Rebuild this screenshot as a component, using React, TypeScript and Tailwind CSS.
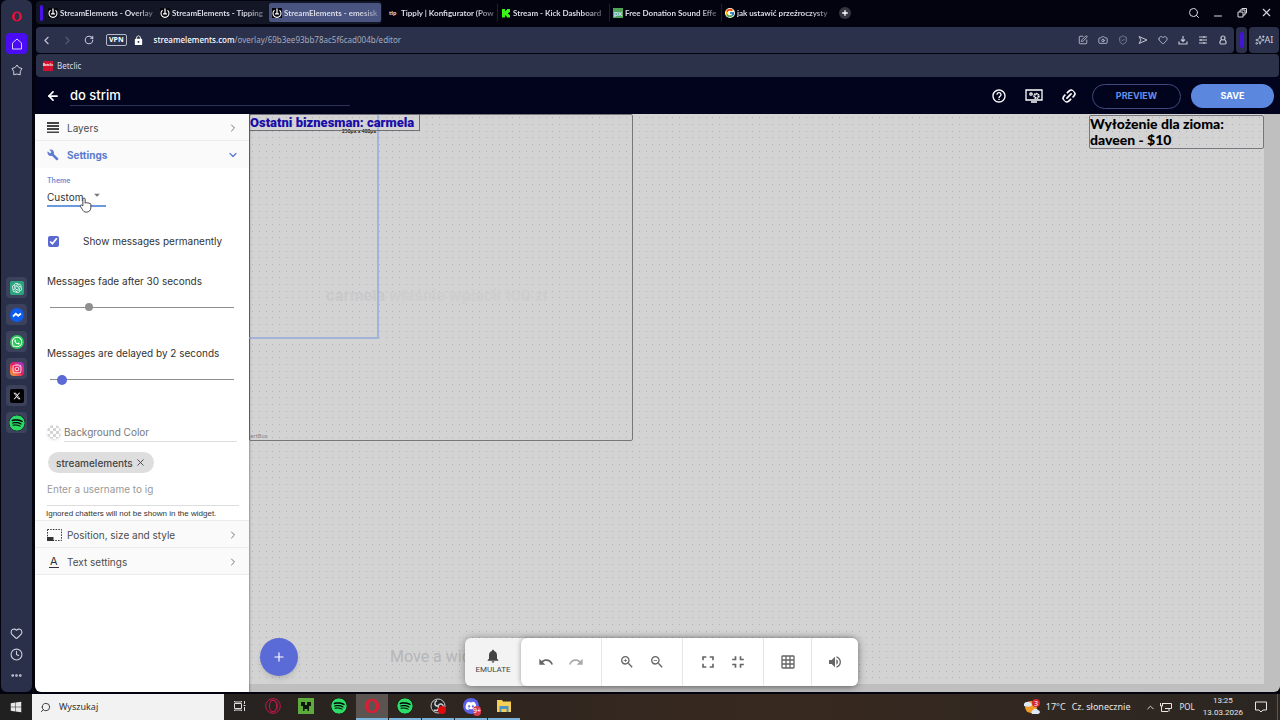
import { useState } from "react";
import type { ReactNode } from "react";
import {
  ArrowLeft,
  Camera,
  ChevronDown,
  ChevronLeft,
  ChevronRight,
  ChevronUp,
  Clock,
  Ellipsis,
  Heart,
  Minus,
  Plus,
  RotateCw,
  Search,
  ShieldCheck,
  Sparkles,
  SquarePen,
  X,
} from "lucide-react";
import { FaDiscord, FaInstagram, FaSpotify, FaWhatsapp, FaWindows } from "react-icons/fa";
import { FaXTwitter } from "react-icons/fa6";
import { FcGoogle } from "react-icons/fc";
import {
  MdArrowDropDown,
  MdBuild,
  MdFullscreen,
  MdFullscreenExit,
  MdGridOn,
  MdHelpOutline,
  MdLock,
  MdNotifications,
  MdRedo,
  MdUndo,
  MdVolumeUp,
  MdZoomIn,
  MdZoomOut,
} from "react-icons/md";
import { RiOpenaiFill } from "react-icons/ri";

const OperaLogo = ({ className, thin }: { className: string; thin?: boolean }) => (
  <svg viewBox="0 0 24 24" className={className} fill="none" stroke="currentColor">
    {thin ? (
      <>
        <circle cx="12" cy="12" r="11" strokeWidth="1.5" />
        <ellipse cx="12" cy="12" rx="5.5" ry="8.5" strokeWidth="1.5" />
        <path d="M8 3.5c7-2 11 3 11 8.500s-4 10.500-11 8.500" strokeWidth="1.2" />
      </>
    ) : (
      <path
        fill="currentColor"
        stroke="none"
        fillRule="evenodd"
        d="M12 1a11 11 0 1 0 0 22 11 11 0 0 0 0-22Zm0 3c3 0 5 3.500 5 8s-2 8-5 8-5-3.500-5-8 2-8 5-8Z"
      />
    )}
  </svg>
);

const SeFavicon = () => (
  <svg viewBox="0 0 20 20" className="size-2.5 shrink-0">
    <rect width="20" height="20" fill="#05060c" />
    <path d="M5 4.500a8 8 0 1 0 10 0" fill="none" stroke="#fff" strokeWidth="2.200" />
    <path d="M10 1v11M6 11.500h8" stroke="#fff" strokeWidth="2.500" />
  </svg>
);

const KickFavicon = () => (
  <svg viewBox="0 0 10 10" className="size-2.5 shrink-0" fill="#39f31b">
    <path d="M1 1h3v2h1V2h1V1h3v3H8v1H7v1h1v1h1v2.500H6v-1H5v-1H4v2H1z" />
  </svg>
);

const tabs: { icon: ReactNode; title: string }[] = [
  { icon: <SeFavicon />, title: "StreamElements - Overlay" },
  { icon: <SeFavicon />, title: "StreamElements - Tipping" },
  { icon: <SeFavicon />, title: "StreamElements - emesisk" },
];

const otherTabs: { icon: ReactNode; title: string }[] = [
  { icon: <b className="w-2.5 text-[6px]">tip</b>, title: "Tipply | Konfigurator (Pow" },
  { icon: <KickFavicon />, title: "Stream - Kick Dashboard" },
  {
    icon: <b className="flex size-2.5 shrink-0 items-center justify-center bg-[#4fa45a] text-[8px] leading-none">px</b>,
    title: "Free Donation Sound Effe",
  },
  { icon: <FcGoogle className="size-2.5 shrink-0 rounded-full bg-white" />, title: "jak ustawić przeźroczysty" },
];

const Tab = ({ icon, title, active }: { icon: ReactNode; title: string; active?: boolean }) => (
  <button
    className={`flex h-[19px] w-28 shrink-0 items-center gap-0.5 rounded-xs pl-[3px] text-left font-['Lato'] text-[8px] font-bold text-[#d9dbe6] ${
      active ? "bg-[#495480]" : ""
    }`}
  >
    {icon}
    <span className="whitespace-nowrap [mask-image:linear-gradient(to_right,black_80%,rgba(0,0,0,0.4))]">{title}</span>
  </button>
);

const TabStrip = () => (
  <div className="flex h-[27px] items-center pb-0.5">
    <div className="flex h-[23px] items-center gap-0.5 rounded-sm bg-[#131624] pl-1 pr-px">
      <span className="h-4 w-[3px] rounded-xs bg-[#4a12e8]" />
      <div className="flex">
        {tabs.map((t, i) => (
          <Tab key={i} {...t} active={i === 2} />
        ))}
      </div>
    </div>
    <div className="ml-1 flex divide-x divide-[#1c2034]">
      {otherTabs.map((t, i) => (
        <Tab key={i} {...t} />
      ))}
    </div>
    <button aria-label="New tab" className="ml-[5px] flex size-3 items-center justify-center rounded-full bg-[#33363f] text-white">
      <Plus size={8} strokeWidth={4} />
    </button>
    <div className="ml-auto flex items-center gap-3 pr-1.5 text-[#d8dae2]">
      <button aria-label="Search tabs"><Search size={12} strokeWidth={2} /></button>
      <button aria-label="Minimize" className="pt-1.5"><Minus size={12} strokeWidth={2} /></button>
      <button aria-label="Restore">
        <svg viewBox="0 0 12 12" className="size-3" fill="none" stroke="currentColor">
          <path d="M2 5h5v5H2zM4 5V3h5v5H7M6 3V1.500h4.500V6H9" />
        </svg>
      </button>
      <button aria-label="Close"><X size={13} strokeWidth={2} /></button>
    </div>
  </div>
);

const AddressRow = () => (
  <div className="flex h-[26px] gap-0.5">
    <div className="flex flex-1 items-center rounded-sm bg-[#2b314b] pl-1 pr-1.5 text-[#c3c7d6]">
      <button aria-label="Back"><ChevronLeft size={13} /></button>
      <button aria-label="Forward" className="ml-2 text-[#555b75]"><ChevronRight size={13} /></button>
      <button aria-label="Reload" className="ml-2.5"><RotateCw size={10} strokeWidth={2.5} /></button>
      <span className="ml-3 rounded-xs border border-[#b6bac8] px-0.5 text-[7px] leading-[10px] font-bold text-white">VPN</span>
      <MdLock size={11} className="ml-1.5 text-white" />
      <span className="ml-2.5 text-[8px] text-[#a5aabd]">
        <span className="font-medium text-white">streamelements.com</span>/overlay/69b3ee93bb78ac5f6cad004b/editor
      </span>
      <div className="ml-auto flex items-center gap-2.5">
        <SquarePen size={10} />
        <Camera size={10} />
        <ShieldCheck size={10} className="text-[#858ba3]" />
        <svg viewBox="0 0 10 10" className="size-2.5" fill="none" stroke="currentColor" strokeLinejoin="round">
          <path d="M1 1.500 9 5 1 8.500 3 5z" />
        </svg>
        <Heart size={10} />
        <svg viewBox="0 0 10 10" className="size-2.5" fill="none" stroke="currentColor" strokeWidth="1.200">
          <path d="M5 1v5M3 4.500 5 6.500l2-2M1 6.500V9h8V6.500" />
        </svg>
        <svg viewBox="0 0 10 10" className="size-2.5" stroke="currentColor" strokeWidth="1.200">
          <path d="M1 2h8M1 5h8M1 8h8M6 1v2M3 4v2M6 7v2" />
        </svg>
        <svg viewBox="0 0 10 10" className="size-2.5" fill="none" stroke="currentColor" strokeWidth="1.200">
          <circle cx="5" cy="3" r="2" />
          <path d="M3.500 4.500C1.500 6 1.500 9 3 9h4c1.500 0 1.500-3-.5-4.500" />
        </svg>
      </div>
    </div>
    <div className="flex w-[11px] items-center justify-center rounded-sm bg-[#2b314b]">
      <span className="h-4 w-1 rounded-xs bg-[#4313d8]" />
    </div>
    <button className="flex w-[30px] items-center justify-center rounded-sm bg-[#2b314b] text-[9px] text-[#ccd0de]">
      <Sparkles size={10} />
      AI
    </button>
  </div>
);

const SideApp = ({ label, children }: { label: string; children: ReactNode }) => (
  <button aria-label={label} className="flex size-[21px] items-center justify-center rounded-sm bg-[#3c425c]">
    {children}
  </button>
);

const BrowserSidebar = () => (
  <nav className="flex w-[31px] shrink-0 flex-col items-center rounded-md bg-[#2b304a] pb-2.5 text-[#ccd0de]">
    <OperaLogo className="mt-[11px] h-[11px] w-3 text-[#e3113c]" />
    <button aria-label="Home" className="mt-[11px] flex size-[21px] items-center justify-center rounded-sm bg-[#4a0cf5]">
      <svg viewBox="0 0 12 12" className="size-3" fill="none" stroke="#d9d0ff" strokeLinejoin="round">
        <path d="M1.500 11V5L6 1l4.500 4v6z" />
      </svg>
    </button>
    <button aria-label="Favourites" className="mt-2.5">
      <svg viewBox="0 0 12 12" className="size-3" fill="none" stroke="currentColor" strokeLinejoin="round">
        <path d="M6 1 7.800 3.500 11 4.500 9.300 7.300 9.200 10.800 6 10 2.800 10.800 2.700 7.300 1 4.500 4.200 3.500z" />
      </svg>
    </button>
    <div className="mt-[201px] flex flex-col gap-1.5">
      <SideApp label="ChatGPT"><RiOpenaiFill className="size-3.5 rounded-xs bg-[#2aa37f] p-px text-white" /></SideApp>
      <SideApp label="Messenger">
        <span className="flex size-3.5 items-center justify-center rounded-full bg-[#0d5cf0]">
          <svg viewBox="0 0 10 10" className="size-2.5" fill="none" stroke="#fff" strokeWidth="1.800"><path d="M1 6.500 3.800 3.800l2.400 2L9 3.500" /></svg>
        </span>
      </SideApp>
      <SideApp label="WhatsApp"><FaWhatsapp className="size-3.5 rounded-full bg-[#2bc65a] p-px text-white" /></SideApp>
      <SideApp label="Instagram">
        <FaInstagram className="size-3.5 rounded-sm bg-linear-to-tr from-[#f9a01b] via-[#e8175d] to-[#a01bd0] p-0.5 text-white" />
      </SideApp>
      <SideApp label="X"><FaXTwitter className="size-3.5 rounded-xs bg-black p-[3px] text-white" /></SideApp>
      <SideApp label="Spotify"><FaSpotify className="size-4 rounded-full bg-black text-[#2bd965]" /></SideApp>
    </div>
    <div className="mt-auto flex flex-col items-center gap-2">
      <Heart size={13} />
      <Clock size={13} />
      <Ellipsis size={13} strokeWidth={3} />
    </div>
  </nav>
);

const EditorHeader = () => (
  <header className="flex h-[37px] items-center bg-[#01041c] pl-[11px] pr-1.5 text-white">
    <button aria-label="Back to overlays"><ArrowLeft size={14} strokeWidth={3} /></button>
    <input
      aria-label="Overlay name"
      defaultValue="do strim"
      className="ml-2.5 h-5 w-[280px] border-b border-[#2c3354] bg-transparent font-['Inter'] text-[13px] font-medium outline-none"
    />
    <div className="ml-auto flex items-center pt-px font-['Inter']">
      <button aria-label="Help"><MdHelpOutline size={16} /></button>
      <button aria-label="Display settings" className="ml-[18px]">
        <svg viewBox="0 0 18 14" className="h-3.5 w-[18px]" fill="none" stroke="currentColor" strokeWidth="1.300">
          <path d="M1 1h16v10H1zM6 13h6" />
          <circle cx="6" cy="5" r="1.200" />
          <circle cx="11.500" cy="7" r="2.200" strokeWidth="2" strokeDasharray="1.300 .5" />
        </svg>
      </button>
      <button aria-label="Copy link" className="ml-[19px]">
        <svg viewBox="0 0 24 24" className="size-3.5 -rotate-45" fill="none" stroke="currentColor" strokeWidth="3" strokeLinecap="round">
          <path d="M14 6h4a6 6 0 0 1 0 12h-2M10 18H6A6 6 0 0 1 6 6h2M7 12h10" />
        </svg>
      </button>
      <button className="ml-4 h-[25px] w-[89px] rounded-full border border-[#3f4a7c] text-[9px] font-bold text-[#6490e8]">PREVIEW</button>
      <button className="ml-2.5 h-6 w-[83px] rounded-full bg-[#5b88de] text-[9px] font-bold">SAVE</button>
    </div>
  </header>
);

const PanelRow = ({ icon, label, open }: { icon: ReactNode; label: string; open?: boolean }) => (
  <button
    className={`flex h-[27px] w-full items-center border-b bg-[#fafafa] pl-3 pr-2.5 pt-px text-[10px] ${
      open ? "border-[#fafafa] font-bold text-[#5b7bd0]" : "border-[#ebebeb] text-[#4d4d4d]"
    }`}
  >
    <span className="flex w-5 items-center">{icon}</span>
    {label}
    {open ? (
      <ChevronDown size={12} strokeWidth={2.5} className="ml-auto" />
    ) : (
      <ChevronRight size={12} className="ml-auto text-[#777]" />
    )}
  </button>
);

const range =
  "mt-3 block h-3 w-full appearance-none bg-transparent [&::-webkit-slider-runnable-track]:h-px [&::-webkit-slider-runnable-track]:bg-[#8e8e8e] [&::-webkit-slider-thumb]:appearance-none [&::-webkit-slider-thumb]:rounded-full";

const SettingsPanel = () => {
  const [fade, setFade] = useState(30);
  const [delay, setDelay] = useState(2);
  const [permanent, setPermanent] = useState(true);

  return (
    <aside className="relative z-10 w-[214px] shrink-0 overflow-hidden rounded-bl-md bg-white font-['Inter'] text-[10px] leading-4 text-[#333] shadow-[1px_0_2px_rgba(0,0,0,0.3)]">
      <PanelRow
        label="Layers"
        icon={
          <svg viewBox="0 0 12 11" className="h-[11px] w-3" fill="#444">
            <path d="M0 0h12v2H0zM0 3h12v2H0zM0 6h12v2H0zM0 9.500h12v1.500H0z" />
          </svg>
        }
      />
      <PanelRow label="Settings" icon={<MdBuild size={12} />} open />
      <div className="px-3">
        <label htmlFor="theme" className="block pt-[5px] text-[7px] font-semibold text-[#6c8fd6]">Theme</label>
        <div className="relative flex w-[59px] border-b-2 border-[#6c9ae0]">
          <select id="theme" className="h-4 w-full appearance-none bg-transparent text-[10px] outline-none">
            <option>Custom</option>
          </select>
          <MdArrowDropDown size={14} className="pointer-events-none absolute -top-px right-0.5 text-[#777]" />
          <svg viewBox="0 0 14 18" className="pointer-events-none absolute left-8 top-2 h-4 w-[13px]" fill="#fff" stroke="#333" strokeLinejoin="round">
            <path d="M4 10V2.500a1.300 1.300 0 0 1 2.600 0V7a1.200 1.200 0 0 1 2.200 0 1.200 1.200 0 0 1 2.200.6 1.100 1.100 0 0 1 2 .6V12c0 3-2 5-5 5-2.500 0-3.500-1-4.500-3L1.200 10.500C.8 9 2.500 8.500 3.200 9.500z" />
          </svg>
        </div>
        <label className="mt-[26px] flex items-center">
          <input
            type="checkbox"
            checked={permanent}
            onChange={(e) => setPermanent(e.target.checked)}
            className="m-0 ml-px size-[11px] accent-[#5b68d0]"
          />
          <span className="ml-6">Show messages permanently</span>
        </label>
        <label htmlFor="fade" className="mt-6 block">Messages fade after {fade} seconds</label>
        <div className="px-[3px]">
          <input
            id="fade"
            type="range"
            min={0}
            max={150}
            value={fade}
            onChange={(e) => setFade(Number(e.target.value))}
            className={`${range} [&::-webkit-slider-thumb]:-mt-1 [&::-webkit-slider-thumb]:size-2 [&::-webkit-slider-thumb]:bg-[#909090]`}
          />
        </div>
        <label htmlFor="delay" className="mt-8 block">Messages are delayed by {delay} seconds</label>
        <div className="px-[3px]">
          <input
            id="delay"
            type="range"
            min={0}
            max={50}
            value={delay}
            onChange={(e) => setDelay(Number(e.target.value))}
            className={`${range} [&::-webkit-slider-thumb]:-mt-1 [&::-webkit-slider-thumb]:size-2.5 [&::-webkit-slider-thumb]:bg-[#5b6ad4]`}
          />
        </div>
        <div className="mt-[37px] flex items-center gap-[3px]">
          <span className="flex size-3.5 items-center justify-center rounded-full bg-[repeating-conic-gradient(#d4d4d4_0_25%,#fff_0_50%)] bg-size-[6px_6px] shadow-sm" />
          <input
            aria-label="Background color"
            placeholder="Background Color"
            className="h-5 min-w-0 flex-1 border-b border-[#ddd] outline-none placeholder:text-[#777]"
          />
        </div>
        <span className="ml-px mt-2.5 flex h-[21px] w-fit items-center gap-0.5 rounded-full bg-[#dedede] px-2 font-medium text-[#444]">
          streamelements
          <button aria-label="Remove streamelements"><X size={11} /></button>
        </span>
      </div>
      <div className="pl-3 pr-2.5">
        <div className="border-b border-[#ddd] pb-2 pt-2">
          <input
            aria-label="Ignored usernames"
            placeholder="Enter a username to ig"
            className="block h-4 w-[118px] outline-none placeholder:text-[#9a9a9a]"
          />
        </div>
      </div>
      <p className="h-[15px] border-b border-[#ebebeb] pl-[11px] font-['Liberation_Sans'] text-[8px]">
        Ignored chatters will not be shown in the widget.
      </p>
      <PanelRow
        label="Position, size and style"
        icon={
          <svg viewBox="0 0 15 12" className="h-3 w-[15px]" fill="none" stroke="#333">
            <path d="M.5 .5h14v11H.5z" strokeDasharray="1.500 1.200" />
            <path d="M0 8h6.500v4H0z" fill="#333" stroke="none" />
          </svg>
        }
      />
      <PanelRow label="Text settings" icon={<span className="ml-0.5 border-b border-[#333] px-px text-[11px] leading-[11px] text-[#333]">A</span>} />
    </aside>
  );
};

// three dots per 20px tile in both directions
const dots = [3, 10, 17];

const DotGrid = () => (
  <svg className="absolute inset-0 size-full" aria-hidden="true">
    <defs>
      <pattern id="dots" width="20" height="20" patternUnits="userSpaceOnUse">
        {dots.map((y) => dots.map((x) => <rect key={`${x}-${y}`} x={x} y={y} width="1" height="1" fill="#b2b3b7" />))}
      </pattern>
    </defs>
    <rect width="100%" height="100%" fill="url(#dots)" />
  </svg>
);

const tool = "flex items-center justify-center";

const Toolbar = () => (
  <div className="absolute bottom-1.5 left-54 flex h-12 rounded-md bg-[#f3f3f3] text-[#666] shadow-[0_1px_8px_rgba(0,0,0,0.4)]">
    <button className="flex w-14 flex-col items-center justify-center font-['Roboto'] text-[8px] leading-3 text-[#444]">
      <MdNotifications size={16} />
      EMULATE
    </button>
    <div className="flex divide-x divide-[#e6e6e6] rounded-md bg-white shadow-[-1px_0_4px_rgba(0,0,0,0.25)]">
      <div className={`${tool} w-[81px] gap-3.5`}>
        <button aria-label="Undo"><MdUndo size={16} /></button>
        <button aria-label="Redo" className="text-[#aaa]"><MdRedo size={16} /></button>
      </div>
      <div className={`${tool} w-[81px] gap-3.5`}>
        <button aria-label="Zoom in"><MdZoomIn size={16} /></button>
        <button aria-label="Zoom out"><MdZoomOut size={16} /></button>
      </div>
      <div className={`${tool} w-[81px] gap-2.5`}>
        <button aria-label="Fit to screen"><MdFullscreen size={20} /></button>
        <button aria-label="Actual size"><MdFullscreenExit size={20} /></button>
      </div>
      <button aria-label="Toggle grid" className={`${tool} w-12`}><MdGridOn size={16} /></button>
      <button aria-label="Sound" className={`${tool} w-[46px]`}><MdVolumeUp size={16} /></button>
    </div>
  </div>
);

const Canvas = () => (
  <main className="relative flex-1 overflow-hidden rounded-br-md bg-[#bfbfbf] pb-2 pr-4">
    <div className="relative h-full overflow-hidden bg-[#d3d3d3]">
      <DotGrid />
      <div className="absolute left-0 top-0 h-[327px] w-[384px] rounded-xs border border-[#77777b]" />
      <span className="absolute -left-1 top-[318px] font-['Roboto'] text-[6px] leading-2 text-[#888]">AlertBox</span>
      <p className="absolute left-[77px] top-[172px] font-['Inter'] text-[15px] leading-5 font-bold text-[#c9c9cc]">
        carmela <span className="text-[#cececf]">właśnie wpłacił 100 zł</span>
      </p>
      <div className="absolute left-0 top-0 h-[225px] w-[130px] border-b-2 border-r-2 border-[#a3b4da]" />
      <span className="absolute left-[93px] top-[13px] whitespace-nowrap font-['Open_Sans'] text-[5px] leading-2 font-semibold text-black">250px x 400px</span>
      <div className="absolute left-0 top-0 h-[17px] w-[171px] whitespace-nowrap border border-[#6f7078] font-['Roboto'] text-[13px] leading-[15px] font-black text-[#1a0da8]">
        Ostatni biznesman: carmela
      </div>
      <div className="absolute right-0 top-px w-[175px] rounded-xs border border-[#77777b] font-['Lato'] text-[14px] leading-4 font-black text-black">
        Wyłożenie dla zioma:
        <br />
        daveen - $10
      </div>
      <span className="absolute bottom-[17px] left-[141px] font-['Roboto'] text-[16px] leading-5 text-[#b6b6b8]">Move a wid</span>
    </div>
    <button aria-label="Add widget" className="absolute bottom-4 left-[11px] flex size-[38px] items-center justify-center rounded-full bg-[#5a6ad6] text-white shadow-md">
      <Plus size={14} />
    </button>
    <Toolbar />
  </main>
);

const taskApps: { name: string; icon: ReactNode; running?: boolean; active?: boolean }[] = [
  {
    name: "Task view",
    icon: (
      <svg viewBox="0 0 12 12" className="size-3" fill="none" stroke="#ddd">
        <path d="M.5 3.500h7v5h-7zM.5 1v1h7V1M.5 11v-1h7v1M10.500 1v3M10.500 7v4M9.500 5.500h2" />
      </svg>
    ),
  },
  { name: "Opera", icon: <OperaLogo thin className="size-4 text-[#c4164c]" /> },
  {
    name: "Minecraft",
    icon: (
      <svg viewBox="0 0 16 16" className="size-4">
        <rect width="16" height="16" fill="#5cab3c" />
        <path d="M3 4h4v3h2V4h4v4h-2v5H9.500v-2h-3v2H5V8H3z" fill="#10180d" />
      </svg>
    ),
  },
  { name: "Spotify", icon: <FaSpotify className="size-4 rounded-full bg-black text-[#2edb66]" /> },
  { name: "Opera GX", icon: <OperaLogo className="size-4 text-[#d91e36]" />, running: true, active: true },
  { name: "Spotify player", icon: <FaSpotify className="size-4 rounded-full bg-black text-[#2edb66]" />, running: true },
  {
    name: "OBS Studio",
    running: true,
    icon: (
      <svg viewBox="0 0 16 16" className="size-4">
        <circle cx="8" cy="8" r="7" fill="#222" stroke="#ccc" />
        <path d="M8 8C4 8 4 4 7 2.500M8 8c2-3.500 5-2 5.500 1M8 8c2 3.500-1 5.500-4 4" fill="none" stroke="#ccc" strokeWidth="1.500" />
        <circle cx="12" cy="12" r="4" fill="#e00a0a" />
      </svg>
    ),
  },
  {
    name: "Discord",
    running: true,
    icon: (
      <span className="relative">
        <FaDiscord className="size-4 rounded-full bg-[#5a62e8] p-0.5 text-white" />
        <span className="absolute -bottom-0.5 -right-0.5 rounded-full bg-[#d83c4c] text-[7px] leading-2.5 text-white">9+</span>
      </span>
    ),
  },
  {
    name: "File Explorer",
    running: true,
    icon: (
      <svg viewBox="0 0 16 14" className="h-3.5 w-4">
        <path d="M1 1h5l1 1.500h8V13H1z" fill="#f5cf55" />
        <path d="M3.500 7h9v6h-2v-3h-5v3h-2z" fill="#4c94c4" />
      </svg>
    ),
  },
];

const Taskbar = () => (
  <footer className="flex h-[26px] bg-linear-to-r from-[#202020] via-[#38291f] via-60% to-[#2b2622] text-[9px] text-[#e6e6e6]">
    <button aria-label="Start" className="flex w-8 items-center justify-center"><FaWindows size={12} /></button>
    <label className="flex w-48 items-center gap-2 bg-[#f2f2f2] pl-2 text-[#333]">
      <Search size={11} className="-scale-x-100" />
      <input aria-label="Search" placeholder="Wyszukaj" className="w-32 bg-transparent text-[9px] outline-none placeholder:text-[#333]" />
    </label>
    <div className="flex gap-px">
      {taskApps.map((app) => (
        <button
          key={app.name}
          aria-label={app.name}
          className={`flex w-8 items-center justify-center border-b-2 ${app.active ? "bg-[#5b5450]" : ""} ${
            app.running ? "border-[#7ab4dc]" : "border-transparent"
          }`}
        >
          {app.icon}
        </button>
      ))}
    </div>
    <div className="ml-auto flex items-center">
      <svg viewBox="0 0 16 16" className="size-4">
        <circle cx="7" cy="8" r="6" fill="#f09a28" />
        <path d="M0 7a3 3 0 0 1 3-4 4 4 0 0 1 5 3c0 2-6 2-8 1ZM8 15a2.500 2.500 0 0 1 1-4 3 3 0 0 1 5 0c3 1 2 4 0 4z" fill="#dfe9f6" />
        <circle cx="12" cy="4" r="4" fill="#d52b2b" />
        <text x="12" y="6.500" textAnchor="middle" fontSize="7" fill="#fff">3</text>
      </svg>
      <span className="ml-1.5">17°C</span>
      <span className="ml-1.5">Cz. słonecznie</span>
      <ChevronUp size={11} className="ml-3.5" />
      <svg viewBox="0 0 12 10" className="ml-1 h-2.5 w-3" fill="none" stroke="currentColor">
        <path d="M3 1.500h8.500v5H5M.5 1v3h2V1M1.500 4v5.500H8M9 6.500v3" />
      </svg>
      <span className="ml-2 text-[8px]">POL</span>
      <div className="ml-2 text-center font-['Roboto'] text-[8px] leading-3">
        <div>13:25</div>
        <div>13.03.2026</div>
      </div>
      <svg viewBox="0 0 12 12" className="ml-3 size-3" fill="none" stroke="currentColor">
        <path d="M.5 1h11v8H8L6 11 4 9H.5z" />
      </svg>
      <span className="ml-2.5 mr-0.5 h-[26px] w-px bg-[#5c5753]" />
    </div>
  </footer>
);

export default function App() {
  return (
    <div className="flex h-screen flex-col bg-[#02030f] font-['Noto_Sans',sans-serif]">
      <div className="flex min-h-0 flex-1 gap-[3px] pb-0.5 pl-px">
        <BrowserSidebar />
        <div className="flex min-w-0 flex-1 flex-col">
          <div className="px-px">
            <TabStrip />
            <AddressRow />
            <div className="mt-px flex h-[23px] items-center gap-1 rounded-sm bg-[#2b3249] pl-[7px] text-[8px] text-[#d9dbe6]">
              <span className="flex size-2.5 items-center justify-center bg-[#d0102e] text-[3px] font-bold text-white">Betclic</span>
              <a href="#betclic">Betclic</a>
            </div>
          </div>
          <EditorHeader />
          <div className="flex min-h-0 flex-1">
            <SettingsPanel />
            <Canvas />
          </div>
        </div>
      </div>
      <Taskbar />
    </div>
  );
}
